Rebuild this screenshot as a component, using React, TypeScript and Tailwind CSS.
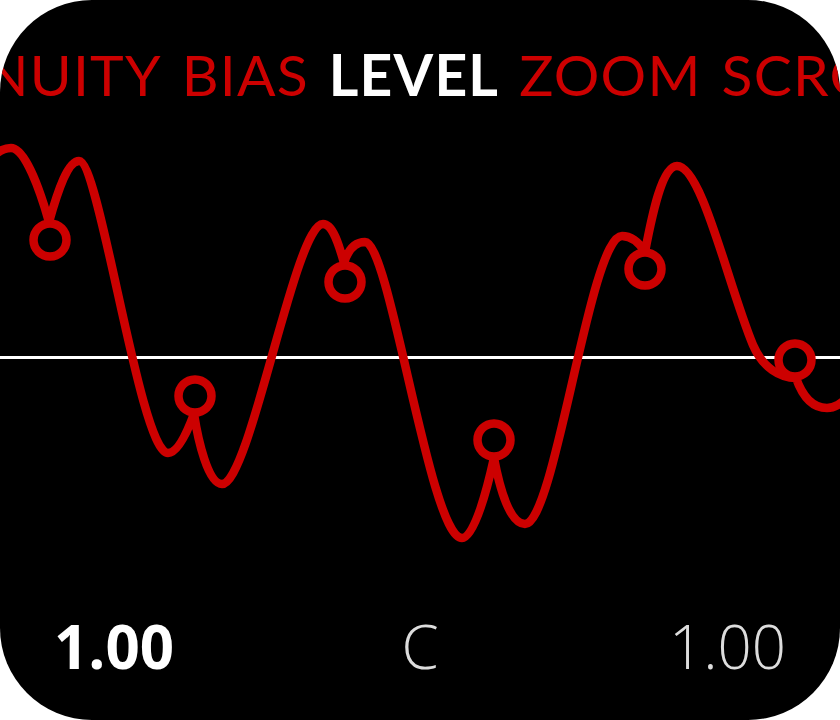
const RED = '#cc0000';

// knot points where the curve pinches into a ring
const rings = [
  { x: 50, y: 240 },
  { x: 195, y: 396 },
  { x: 345, y: 282 },
  { x: 494, y: 440 },
  { x: 645, y: 269 },
  { x: 795, y: 360 },
];

const wave = [
  'M -6 156 C 0 150, 5 148, 11 148',
  'C 25 148, 40 190, 49 222',
  'C 58 190, 68 161, 79 161',
  'C 100 161, 140 453, 168 453',
  'C 178 453, 188 430, 194 414',
  'C 198 440, 208 484, 222 484',
  'C 250 484, 295 224, 323 224',
  'C 333 224, 339 245, 344 263',
  'C 348 250, 355 242, 365 242',
  'C 390 242, 430 538, 462 538',
  'C 475 538, 488 485, 494 458',
  'C 500 490, 510 524, 525 524',
  'C 555 524, 590 236, 622 236',
  'C 632 236, 640 244, 645 252',
  'C 652 215, 662 166, 677 166',
  'C 702 166, 728 285, 753 345',
  'C 763 368, 780 378, 796 378',
  'C 802 395, 812 408, 827 408',
  'C 835 408, 840 404, 850 396',
].join(' ');

export default function App() {
  return (
    <div className="w-[840px] h-[720px] bg-white">
      <div className="w-full h-full bg-black rounded-[92px] overflow-hidden flex flex-col">

        {/* ── Parameter strip ── */}
        <div className="h-[130px] shrink-0 pt-[46px] overflow-hidden">
          <div
            className="flex gap-[20px] whitespace-nowrap ml-[-197px] text-[57px] leading-[57px] tracking-[1.2px] text-[#cc0000]"
            style={{ fontFamily: 'Lato, "Noto Sans", sans-serif' }}
          >
            <span>CONTINUITY</span>
            <span>BIAS</span>
            <span className="font-bold text-white">LEVEL</span>
            <span>ZOOM</span>
            <span>SCROLL</span>
          </div>
        </div>

        {/* ── Waveform ── */}
        <svg className="h-[460px] w-full shrink-0 block" viewBox="0 130 840 460">
          <rect x="0" y="356" width="840" height="3" fill="#fff" />
          <path d={wave} fill="none" stroke={RED} strokeWidth="8.5" strokeLinejoin="round" strokeLinecap="round" />
          {rings.map((r) => (
            <circle key={r.x} cx={r.x} cy={r.y} r="16.5" fill="#000" stroke={RED} strokeWidth="8.5" />
          ))}
        </svg>

        {/* ── Values ── */}
        <div
          className="grid grid-cols-3 px-[54px] pt-[26px] text-[60px] leading-[60px]"
          style={{ fontFamily: '"Open Sans", "Noto Sans", sans-serif' }}
        >
          <span className="text-left font-bold text-white">1.00</span>
          <span className="text-center font-light text-[#dddddd]">C</span>
          <span className="text-right font-light text-[#dddddd]">1.00</span>
        </div>
      </div>
    </div>
  );
}
